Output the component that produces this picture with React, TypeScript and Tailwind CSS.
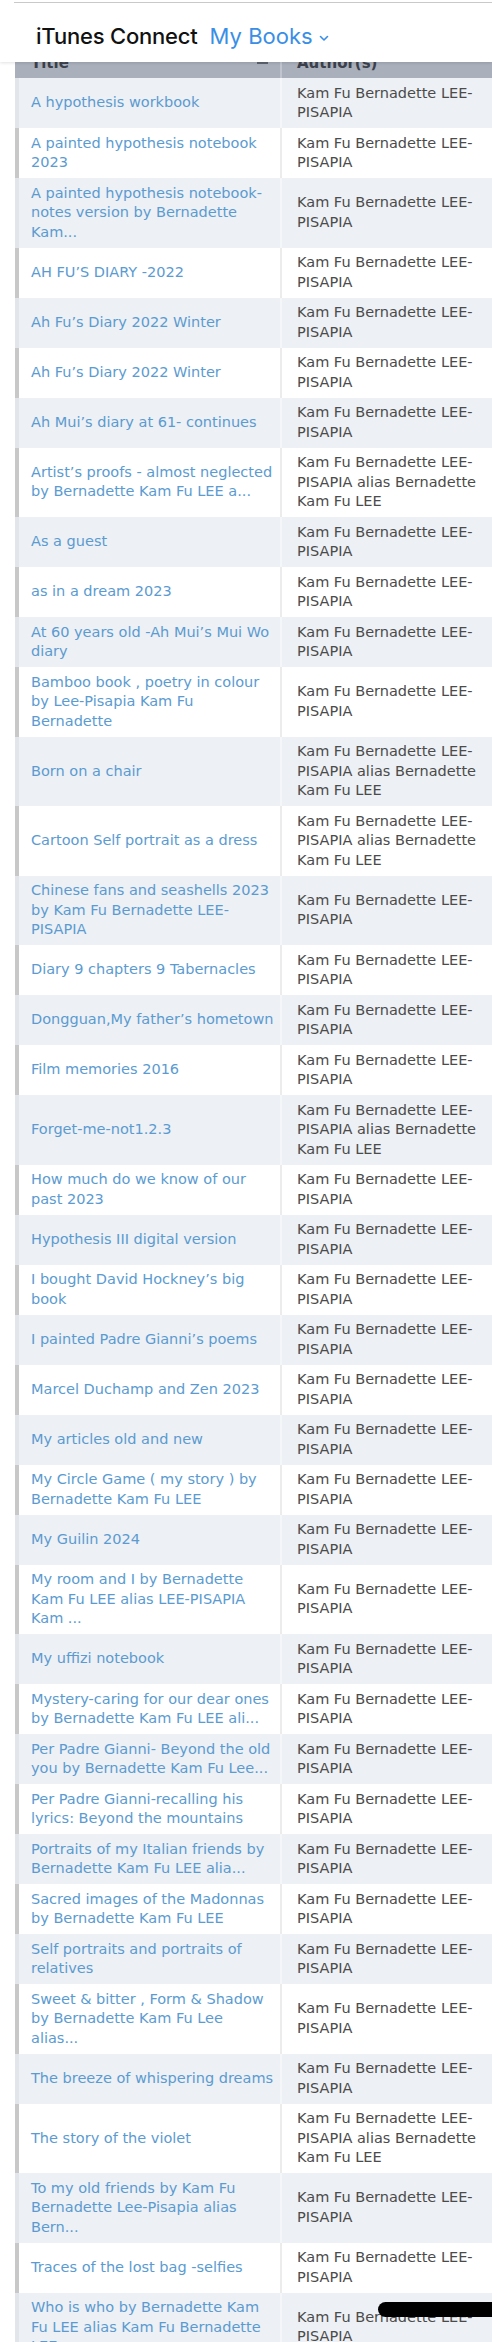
import React from 'react';

const ALIAS = 'Kam Fu Bernadette LEE-\nPISAPIA alias Bernadette\nKam Fu LEE';
const PLAIN = 'Kam Fu Bernadette LEE-\nPISAPIA';

const BOOKS: { title: string; author?: string }[] = [
  { title: 'A hypothesis workbook' },
  { title: 'A painted hypothesis notebook\n2023' },
  { title: 'A painted hypothesis notebook-\nnotes version by Bernadette\nKam...' },
  { title: 'AH FU’S DIARY -2022' },
  { title: 'Ah Fu’s Diary 2022 Winter' },
  { title: 'Ah Fu’s Diary 2022 Winter' },
  { title: 'Ah Mui’s diary at 61- continues' },
  { title: 'Artist’s proofs - almost neglected\nby Bernadette Kam Fu LEE a...', author: ALIAS },
  { title: 'As a guest' },
  { title: 'as in a dream 2023' },
  { title: 'At 60 years old -Ah Mui’s Mui Wo\ndiary' },
  { title: 'Bamboo book , poetry in colour\nby Lee-Pisapia Kam Fu\nBernadette' },
  { title: 'Born on a chair', author: ALIAS },
  { title: 'Cartoon Self portrait as a dress', author: ALIAS },
  { title: 'Chinese fans and seashells 2023\nby Kam Fu Bernadette LEE-\nPISAPIA' },
  { title: 'Diary 9 chapters 9 Tabernacles' },
  { title: 'Dongguan,My father’s hometown' },
  { title: 'Film memories 2016' },
  { title: 'Forget-me-not1.2.3', author: ALIAS },
  { title: 'How much do we know of our\npast 2023' },
  { title: 'Hypothesis III digital version' },
  { title: 'I bought David Hockney’s big\nbook' },
  { title: 'I painted Padre Gianni’s poems' },
  { title: 'Marcel Duchamp and Zen 2023' },
  { title: 'My articles old and new' },
  { title: 'My Circle Game ( my story ) by\nBernadette Kam Fu LEE' },
  { title: 'My Guilin 2024' },
  { title: 'My room and I by Bernadette\nKam Fu LEE alias LEE-PISAPIA\nKam ...' },
  { title: 'My uffizi notebook' },
  { title: 'Mystery-caring for our dear ones\nby Bernadette Kam Fu LEE ali...' },
  { title: 'Per Padre Gianni- Beyond the old\nyou by Bernadette Kam Fu Lee...' },
  { title: 'Per Padre Gianni-recalling his\nlyrics: Beyond the mountains' },
  { title: 'Portraits of my Italian friends by\nBernadette Kam Fu LEE alia...' },
  { title: 'Sacred images of the Madonnas\nby Bernadette Kam Fu LEE' },
  { title: 'Self portraits and portraits of\nrelatives' },
  { title: 'Sweet & bitter , Form & Shadow\nby Bernadette Kam Fu Lee\nalias...' },
  { title: 'The breeze of whispering dreams' },
  { title: 'The story of the violet', author: ALIAS },
  { title: 'To my old friends by Kam Fu\nBernadette Lee-Pisapia alias\nBern...' },
  { title: 'Traces of the lost bag -selfies' },
  { title: 'Who is who by Bernadette Kam\nFu LEE alias Kam Fu Bernadette\nLEE...' },
];

const App = () => {
  return (
    <div className="relative w-[492px] h-[2342px] overflow-hidden bg-white">
      {/* Top bar */}
      <header className="relative z-10 h-[62px] bg-white shadow-[0_1px_3px_rgba(0,0,0,0.12)]">
        <div className="absolute top-[2px] left-[14px] right-0 h-px bg-[#c9c9c9]"></div>
        <div className="flex items-baseline pl-[36px] pt-[20px] font-['Inter',sans-serif]">
          <span className="text-[22px] font-medium tracking-[-0.2px] text-[#111]">iTunes Connect</span>
          <span className="ml-[12px] text-[22px] text-[#3a8ee6]">My Books</span>
          <svg className="ml-[6px] w-[10px] h-[7px] self-center mt-[4px]" viewBox="0 0 10 7" fill="none">
            <path d="M1.5 1.5 L5 5 L8.5 1.5" stroke="#3a8ee6" strokeWidth="1.6" strokeLinecap="round" strokeLinejoin="round" />
          </svg>
        </div>
      </header>

      {/* Table */}
      <div className="pl-[15px] font-['DejaVu_Sans',Verdana,sans-serif] text-[14.5px] leading-[19.5px]">
        <div className="flex h-[16px] overflow-hidden bg-[#a9afbb] text-[15px] font-bold text-[#3c414c]">
          <div className="relative w-[265px] pl-[16px]">
            <div className="-mt-[8px] leading-[19px]">Title</div>
            <div className="absolute top-0 right-[12px] w-[11px] h-[2px] bg-[#5d6370]"></div>
          </div>
          <div className="flex-1 border-l-2 border-[#bfc4ce] pl-[15px]">
            <div className="-mt-[8px] leading-[19px]">Author(s)</div>
          </div>
        </div>

        {BOOKS.map((book, i) => {
          const odd = i % 2 === 0;
          return (
            <div key={i} className={`flex ${odd ? 'bg-[#edf0f4]' : 'bg-white'}`}>
              <div
                className={`w-[265px] shrink-0 flex items-center border-l-4 pl-[12px] py-[5.5px] ${
                  odd ? 'border-[#e2e5ea]' : 'border-[#c8c8c8]'
                }`}
              >
                <a href="#" className="whitespace-pre text-[#5b9bd1]">{book.title}</a>
              </div>
              <div
                className={`flex-1 flex items-center border-l-2 pl-[15px] py-[5.5px] ${
                  odd ? 'border-[#f5f6f8]' : 'border-[#ececec]'
                }`}
              >
                <span className="whitespace-pre text-[#4b4b4b]">{book.author ?? PLAIN}</span>
              </div>
            </div>
          );
        })}
      </div>

      <div className="absolute left-[378px] top-[2302px] w-[140px] h-[15px] rounded-full bg-black"></div>
    </div>
  );
};

export default App;
